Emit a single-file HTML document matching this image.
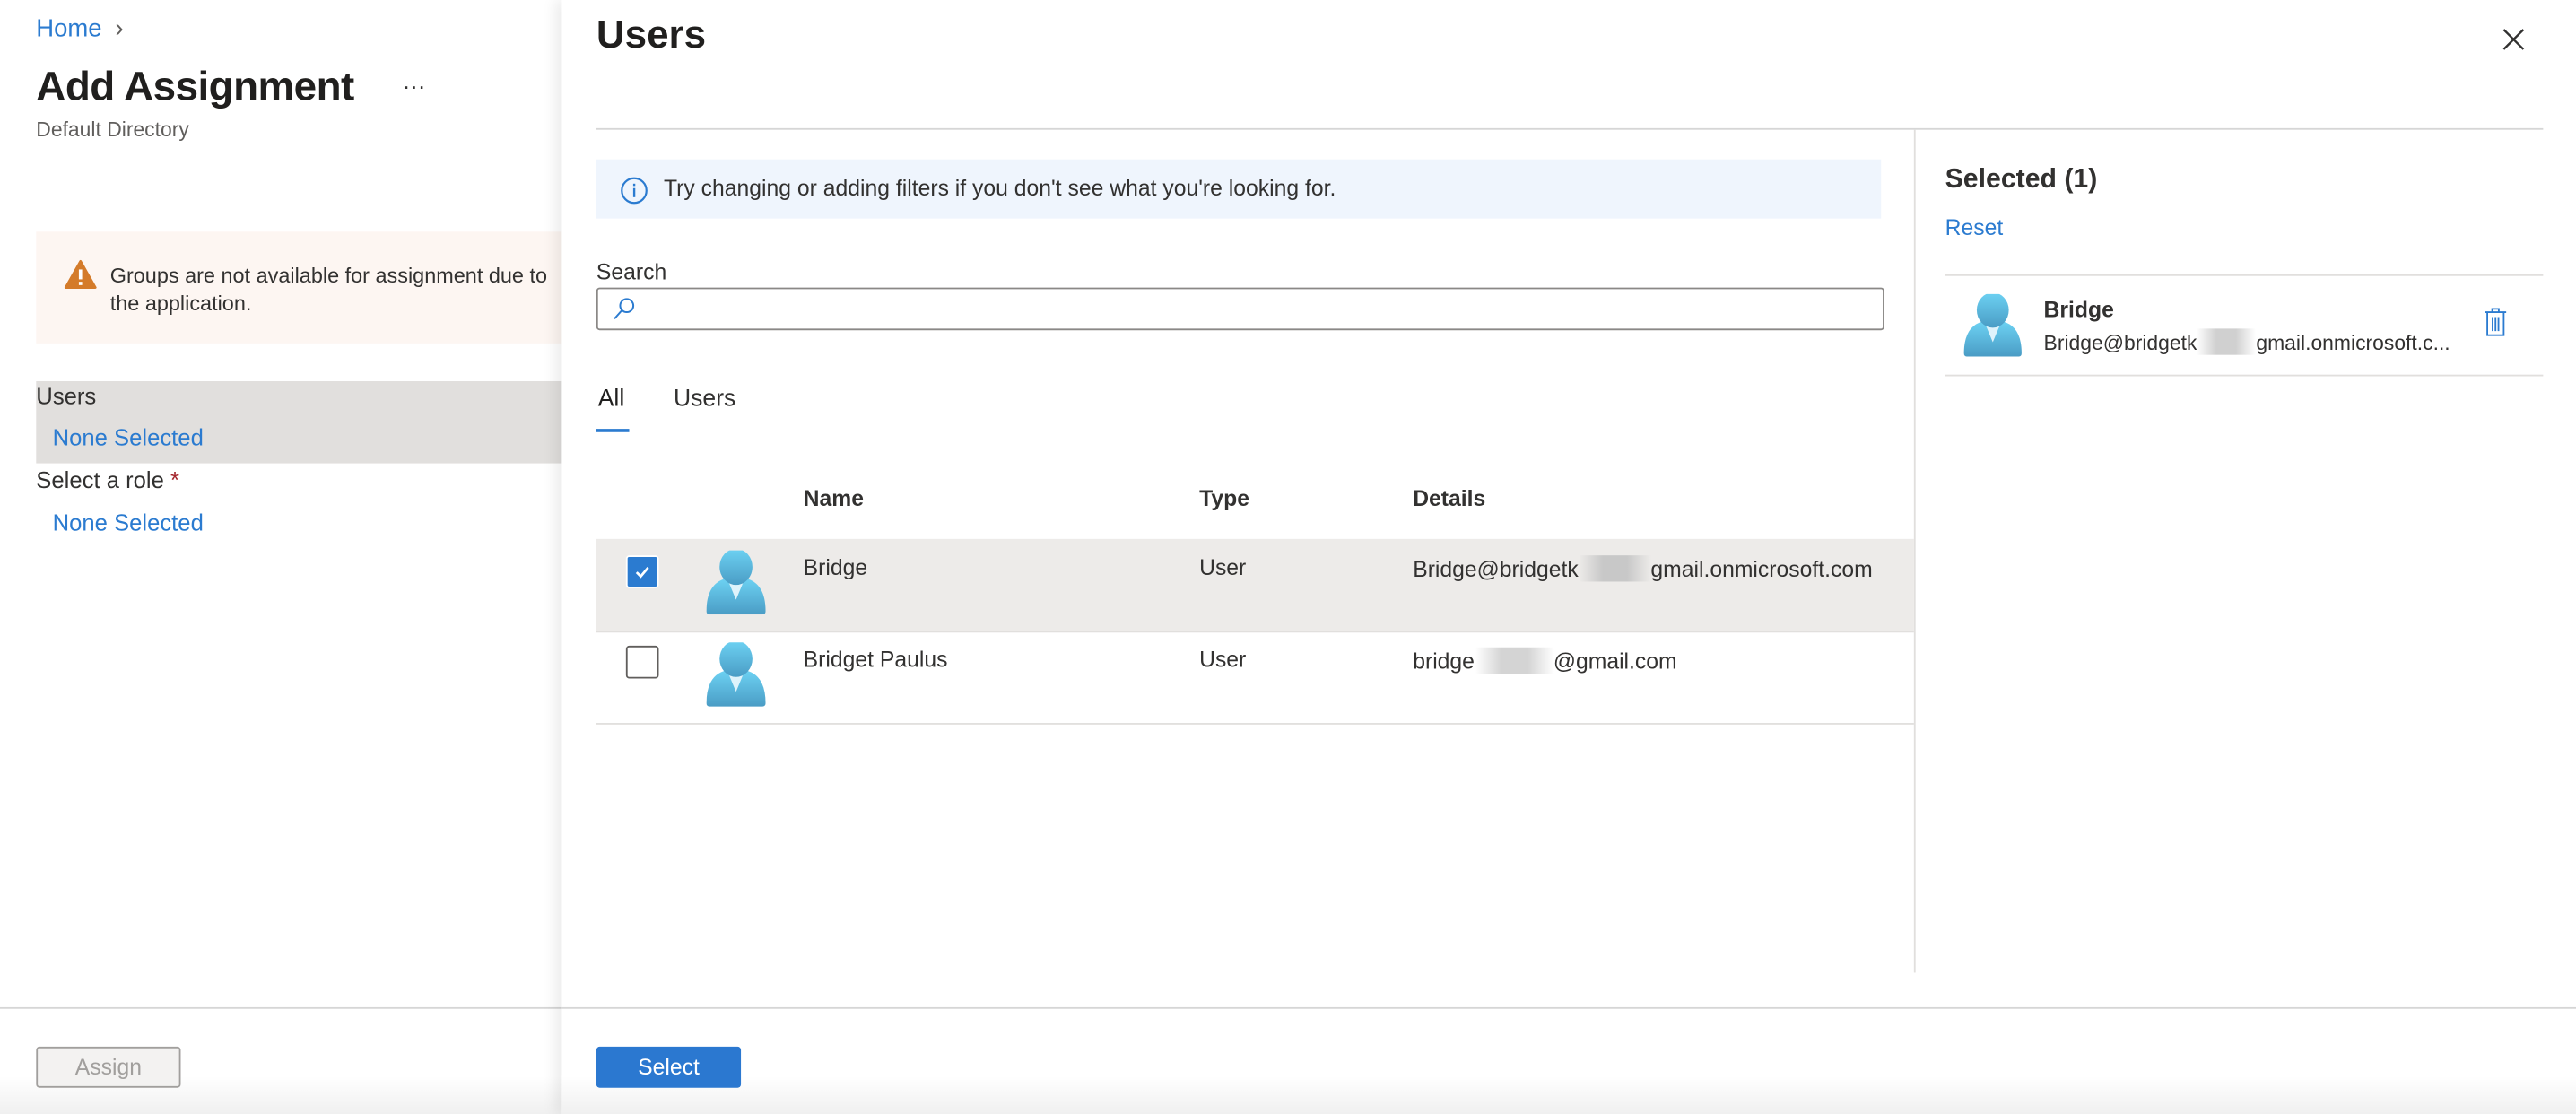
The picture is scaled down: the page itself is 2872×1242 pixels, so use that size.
<!DOCTYPE html>
<html><head><meta charset="utf-8"><style>
html,body{margin:0;padding:0;background:#fff;overflow:hidden}
#w{position:absolute;left:0;top:0;width:1568px;height:678px;transform:scale(1.83163,1.83186);transform-origin:0 0;font-family:"Liberation Sans",sans-serif;color:#323130}
.a{position:absolute;white-space:nowrap;line-height:1.2}
.b{color:#2b7bd0}
.hl{position:absolute;height:1px;background:#e1dfdd}
</style></head><body><div id="w">
<!-- left blade -->
<div class="a b" style="left:22px;top:9px;font-size:15px">Home <span style="color:#605e5c;margin-left:4px">&#8250;</span></div>
<div class="a" style="left:22px;top:38px;font-size:25px;font-weight:bold;color:#201f1e;letter-spacing:-0.3px">Add Assignment</div>
<div class="a" style="left:245px;top:44px;font-size:14px;color:#323130">···</div>
<div class="a" style="left:22px;top:72px;font-size:12.5px;color:#605e5c">Default Directory</div>
<div style="position:absolute;left:22px;top:141px;width:320px;height:68px;background:#fdf6f2"></div>
<svg style="position:absolute;left:39px;top:158px" width="20" height="18" viewBox="0 0 20 18"><path d="M10 1 L19 17 L1 17 Z" fill="#d47b2a" stroke="#d47b2a" stroke-linejoin="round" stroke-width="1.5"/><rect x="9" y="6" width="2" height="6" fill="#fff"/><rect x="9" y="13.5" width="2" height="2" fill="#fff"/></svg>
<div class="a" style="left:67px;top:160px;font-size:12.8px;color:#323130;line-height:16.5px">Groups are not available for assignment due to<br>the application.</div>
<div style="position:absolute;left:22px;top:232px;width:320px;height:50px;background:#e1dfdd"></div>
<div class="a" style="left:22px;top:233px;font-size:14px">Users</div>
<div class="a b" style="left:32px;top:258px;font-size:14px">None Selected</div>
<div class="a" style="left:22px;top:284px;font-size:14px">Select a role <span style="color:#a4262c">*</span></div>
<div class="a b" style="left:32px;top:310px;font-size:14px">None Selected</div>
<div class="hl" style="left:0;top:613px;width:342px;background:#d6d6d6"></div>
<div style="position:absolute;left:0;top:655px;width:342px;height:23px;background:linear-gradient(#fff,#f0f0f0)"></div>
<div style="position:absolute;left:22px;top:637px;width:86px;height:23px;border:1px solid #a19f9d;background:#f3f2f1;border-radius:2px;color:#a19f9d;font-size:13.5px;text-align:center;line-height:23px">Assign</div>
<!-- panel -->
<div style="position:absolute;left:342px;top:0;width:1226px;height:678px;background:#fff;box-shadow:-4px 0 8px rgba(0,0,0,0.08)"></div>
<div class="a" style="left:363px;top:8px;font-size:24px;font-weight:bold;color:#201f1e">Users</div>
<svg style="position:absolute;left:1523px;top:17px" width="14" height="14" viewBox="0 0 14 14"><path d="M1 1L13 13M13 1L1 13" stroke="#323130" stroke-width="1.3"/></svg>
<div class="hl" style="left:363px;top:78px;width:1185px;background:#d6d6d6"></div>
<div style="position:absolute;left:1165px;top:79px;width:1px;height:513px;background:#e1dfdd"></div>
<div style="position:absolute;left:363px;top:97px;width:782px;height:36px;background:#eff5fd"></div>
<svg style="position:absolute;left:377px;top:107px" width="18" height="18" viewBox="0 0 18 18"><circle cx="9" cy="9" r="7.5" fill="none" stroke="#2b7bd0" stroke-width="1.2"/><rect x="8.4" y="7.5" width="1.3" height="5.5" fill="#2b7bd0"/><rect x="8.4" y="4.8" width="1.3" height="1.4" fill="#2b7bd0"/></svg>
<div class="a" style="left:404px;top:107px;font-size:13.5px">Try changing or adding filters if you don't see what you're looking for.</div>
<div class="a" style="left:363px;top:158px;font-size:13.5px">Search</div>
<div style="position:absolute;left:363px;top:175px;width:782px;height:24px;border:1px solid #8a8886;border-radius:2px"></div>
<svg style="position:absolute;left:372px;top:180px" width="16" height="16" viewBox="0 0 16 16"><circle cx="9.5" cy="6" r="4" fill="none" stroke="#2b7bd0" stroke-width="1.1"/><path d="M6.6 8.8L2 14" stroke="#2b7bd0" stroke-width="1.1"/></svg>
<div class="a" style="left:364px;top:235px;font-size:14.5px;color:#201f1e">All</div>
<div style="position:absolute;left:363px;top:261px;width:20px;height:2px;background:#2b7bd0"></div>
<div class="a" style="left:410px;top:235px;font-size:14.5px">Users</div>
<div class="a" style="left:489px;top:296px;font-size:13.5px;font-weight:bold">Name</div>
<div class="a" style="left:730px;top:296px;font-size:13.5px;font-weight:bold">Type</div>
<div class="a" style="left:860px;top:296px;font-size:13.5px;font-weight:bold">Details</div>
<div style="position:absolute;left:363px;top:328px;width:802px;height:56px;background:#edebe9"></div>
<div class="hl" style="left:363px;top:384px;width:802px"></div>
<div class="hl" style="left:363px;top:440px;width:802px"></div>
<div style="position:absolute;left:381px;top:338px;width:20px;height:20px;background:#2b7bd0;border-radius:2px;border:1px solid #fff;box-sizing:border-box"></div>
<svg style="position:absolute;left:381px;top:338px" width="20" height="20" viewBox="0 0 20 20"><path d="M6.5 10.3L9 12.8L13.5 7.5" fill="none" stroke="#fff" stroke-width="1.5"/></svg>
<div style="position:absolute;left:381px;top:393px;width:20px;height:20px;border:1px solid #605e5c;border-radius:2px;box-sizing:border-box;background:#fff"></div>
<svg width="0" height="0" style="position:absolute"><defs><linearGradient id="g" x1="0" y1="0" x2="0" y2="1"><stop offset="0" stop-color="#6dd2f3"/><stop offset="1" stop-color="#4a9cc5"/></linearGradient></defs></svg>
<svg style="position:absolute;left:430px;top:335px" width="36" height="39" viewBox="0 0 36 39"><path d="M0 37Q0 20 12 17L24 17Q36 20 36 37Q36 39 34 39L2 39Q0 39 0 37Z" fill="url(#g)"/><path d="M13 18L23 18L18 30Z" fill="#dff3fb"/><ellipse cx="18" cy="10" rx="10" ry="11" fill="url(#g)"/></svg>
<svg style="position:absolute;left:430px;top:391px" width="36" height="39" viewBox="0 0 36 39"><path d="M0 37Q0 20 12 17L24 17Q36 20 36 37Q36 39 34 39L2 39Q0 39 0 37Z" fill="url(#g)"/><path d="M13 18L23 18L18 30Z" fill="#dff3fb"/><ellipse cx="18" cy="10" rx="10" ry="11" fill="url(#g)"/></svg>
<div class="a" style="left:489px;top:338px;font-size:13.5px">Bridge</div>
<div class="a" style="left:730px;top:338px;font-size:13.5px">User</div>
<div class="a" style="left:860px;top:338px;font-size:13.5px">Bridge@bridgetk<span style="display:inline-block;width:44px;height:16px;vertical-align:-3px;background:linear-gradient(90deg,#edebe9,#c8c8c8,#c8c8c8,#edebe9)"></span>gmail.onmicrosoft.com</div>
<div class="a" style="left:489px;top:394px;font-size:13.5px">Bridget Paulus</div>
<div class="a" style="left:730px;top:394px;font-size:13.5px">User</div>
<div class="a" style="left:860px;top:394px;font-size:13.5px">bridge<span style="display:inline-block;width:48px;height:16px;vertical-align:-3px;background:linear-gradient(90deg,#fff,#d4d4d4,#d4d4d4,#fff)"></span>@gmail.com</div>
<!-- right pane -->
<div class="a" style="left:1184px;top:100px;font-size:16.5px;font-weight:bold">Selected (1)</div>
<div class="a b" style="left:1184px;top:131px;font-size:13.5px">Reset</div>
<div class="hl" style="left:1184px;top:167px;width:364px"></div>
<div class="hl" style="left:1184px;top:228px;width:364px"></div>
<svg style="position:absolute;left:1195px;top:179px" width="36" height="38" viewBox="0 0 36 39"><path d="M0 37Q0 20 12 17L24 17Q36 20 36 37Q36 39 34 39L2 39Q0 39 0 37Z" fill="url(#g)"/><path d="M13 18L23 18L18 30Z" fill="#dff3fb"/><ellipse cx="18" cy="10" rx="10" ry="11" fill="url(#g)"/></svg>
<div class="a" style="left:1244px;top:181px;font-size:13.5px;font-weight:bold">Bridge</div>
<div class="a" style="left:1244px;top:200px;font-size:12.5px">Bridge@bridgetk<span style="display:inline-block;width:36px;height:16px;vertical-align:-3px;background:linear-gradient(90deg,#fff,#d0d0d0,#d0d0d0,#fff)"></span>gmail.onmicrosoft.c...</div>
<svg style="position:absolute;left:1511px;top:187px" width="16" height="18" viewBox="0 0 16 18"><path d="M1.5 3H14.5M6 3V1H10V3M3 3V17H13V3M6.2 6V14.5M8 6V14.5M9.8 6V14.5" fill="none" stroke="#2b7bd0" stroke-width="1"/></svg>
<!-- footer -->
<div class="hl" style="left:342px;top:613px;width:1226px;background:#d6d6d6"></div>
<div style="position:absolute;left:342px;top:655px;width:1226px;height:23px;background:linear-gradient(#fff,#f0f0f0)"></div>
<div style="position:absolute;left:363px;top:637px;width:88px;height:25px;background:#2b78d0;border-radius:2px;color:#fff;font-size:13.5px;text-align:center;line-height:25px">Select</div>
</div></body></html>
